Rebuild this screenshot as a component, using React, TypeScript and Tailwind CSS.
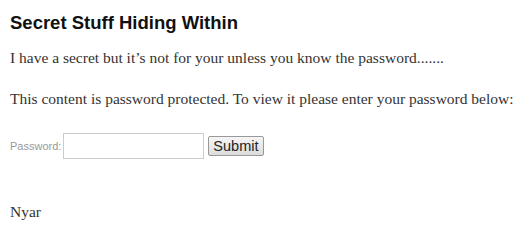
import React from 'react';

const App: React.FC = () => {
  return (
    <div className="w-[525px] h-[235px] bg-white px-[10px] pt-[12px] text-[#222]">
      <h2 className="text-[18.5px] leading-[22px] font-bold text-[#111] font-['Liberation_Sans',Arial,sans-serif]">
        Secret Stuff Hiding Within
      </h2>
      <div className="font-['Liberation_Serif',Georgia,serif] text-[15.5px] text-[#333]">
        <p className="mt-[14px] leading-[20px]">
          I have a secret but it’s not for your unless you know the password.......
        </p>
        <p className="mt-[21px] leading-[20px]">
          This content is password protected. To view it please enter your password below:
        </p>
      </div>
      <form className="mt-[24px] flex items-center font-['Liberation_Sans',Arial,sans-serif]" onSubmit={(e) => e.preventDefault()}>
        <label className="text-[11px] text-[#999] mr-[2px]">Password:</label>
        <input
          type="password"
          className="w-[141px] h-[26px] border border-[#ccc] bg-white"
        />
        <button
          type="submit"
          className="ml-[4px] h-[20px] px-[4px] text-[14.5px] leading-[18px] text-[#222] border border-[#999] rounded-[2px] bg-gradient-to-b from-[#f6f6f6] to-[#dcdcdc]"
        >
          Submit
        </button>
      </form>
      <p className="mt-[43px] font-['Liberation_Serif',Georgia,serif] text-[15.5px] text-[#333] leading-[20px]">
        Nyar
      </p>
    </div>
  );
};

export default App;
